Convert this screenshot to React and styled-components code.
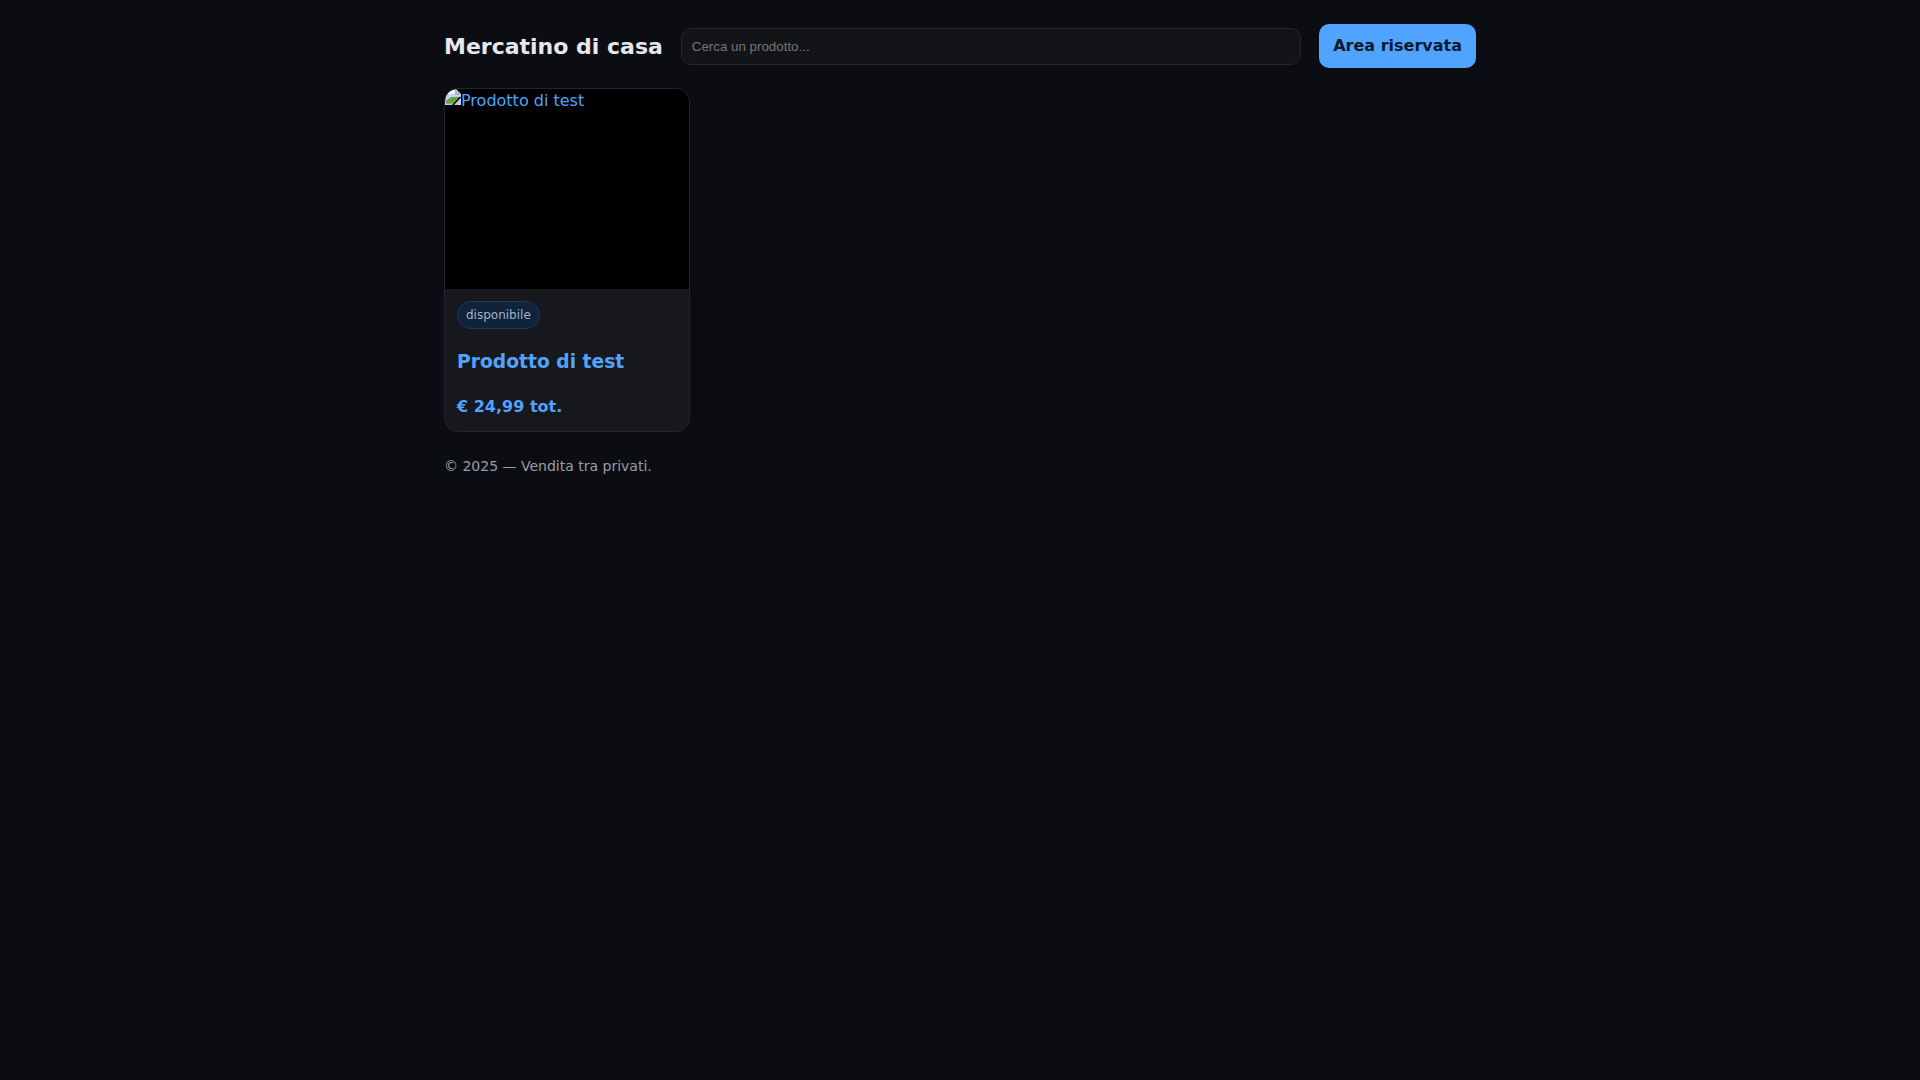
import React from 'react';
import styled, { createGlobalStyle } from 'styled-components';

const GlobalStyle = createGlobalStyle`
  * {
    box-sizing: border-box;
  }

  html, body {
    margin: 0;
    min-height: 100%;
    background: #0b0d12;
  }

  body {
    color: #e6e8ee;
    font-family: "DejaVu Sans", sans-serif;
    font-size: 16px;
  }
`;

const Page = styled.div`
  width: 1032px;
  margin: 0 auto;
  padding-top: 24px;
`;

const Header = styled.header`
  display: flex;
  align-items: center;
  gap: 18px;
  margin-bottom: 20px;
`;

const Brand = styled.h1`
  margin: 0;
  padding-top: 1px;
  font-size: 22px;
  font-weight: 700;
  line-height: 43px;
  white-space: nowrap;
  color: #e6e8ee;
`;

const SearchInput = styled.input`
  flex: 1;
  height: 37px;
  padding: 0 10px;
  background: #121418;
  border: 1px solid #23252c;
  border-radius: 10px;
  color: #e6e8ee;
  font-family: "Liberation Sans", Arial, sans-serif;
  font-size: 13.33px;
  outline: none;

  &::placeholder {
    color: #757575;
    opacity: 1;
  }
`;

const ReservedButton = styled.a`
  display: flex;
  align-items: center;
  height: 44px;
  padding: 0 14px 2px;
  background: #50a4ff;
  border-radius: 10px;
  color: #0b1a2e;
  font-size: 16px;
  font-weight: 700;
  white-space: nowrap;
  text-decoration: none;
`;

const Grid = styled.main`
  display: grid;
  grid-template-columns: repeat(auto-fill, 246px);
  gap: 16px;
`;

const Card = styled.article`
  display: flex;
  flex-direction: column;
  height: 344px;
  background: #16181d;
  border: 1px solid #23252c;
  border-radius: 14px;
  overflow: hidden;
`;

const Thumb = styled.a`
  display: block;
  height: 200px;
  background: #000;
  color: #50a4ff;
  font-size: 16px;
  line-height: 24px;
  text-decoration: none;
`;

const BrokenIcon = styled.svg`
  width: 16px;
  height: 16px;
  vertical-align: top;
`;

const CardBody = styled.div`
  padding: 12px;
`;

const Badge = styled.span`
  display: inline-block;
  height: 28px;
  padding: 0 8px;
  background: #11233a;
  border: 1px solid #1e3a5a;
  border-radius: 999px;
  color: #9db4cd;
  font-size: 12px;
  line-height: 26px;
`;

const ProductTitle = styled.h3`
  margin: 17px 0 0;
  color: #50a4ff;
  font-size: 18.72px;
  font-weight: 700;
  line-height: 32px;
`;

const Price = styled.div`
  margin-top: 17px;
  color: #50a4ff;
  font-size: 16px;
  font-weight: 700;
  line-height: 24px;
`;

const Footer = styled.footer`
  margin-top: 24px;
  color: #9a9da4;
  font-size: 14px;
  line-height: 21px;
`;

const BrokenImage = () => (
  <BrokenIcon viewBox="0 0 16 16" aria-hidden="true">
    <path d="M0 0H11L16 5V16H0Z" fill="#c9ccd2" />
    <path d="M1 1H10V6H15V9H1Z" fill="#c6d4f2" />
    <path d="M3 1H10V5H3Z" fill="#f2f4f8" />
    <path d="M1 12L6 8H15L9 14H1Z" fill="#5fa83f" />
    <path d="M1 14H8V15H1Z" fill="#9aa592" />
    <path d="M10 1V6H15Z" fill="#aeb2b8" />
    <path d="M15 7.5L16 8.5L9 16H7Z" fill="#000" />
  </BrokenIcon>
);

export default function App() {
  return (
    <>
      <GlobalStyle />
      <Page>
        <Header>
          <Brand>Mercatino di casa</Brand>
          <SearchInput placeholder="Cerca un prodotto..." />
          <ReservedButton href="#">Area riservata</ReservedButton>
        </Header>
        <Grid>
          <Card>
            <Thumb href="#">
              <BrokenImage />
              Prodotto di test
            </Thumb>
            <CardBody>
              <Badge>disponibile</Badge>
              <ProductTitle>Prodotto di test</ProductTitle>
              <Price>€ 24,99 tot.</Price>
            </CardBody>
          </Card>
        </Grid>
        <Footer>© 2025 — Vendita tra privati.</Footer>
      </Page>
    </>
  );
}
